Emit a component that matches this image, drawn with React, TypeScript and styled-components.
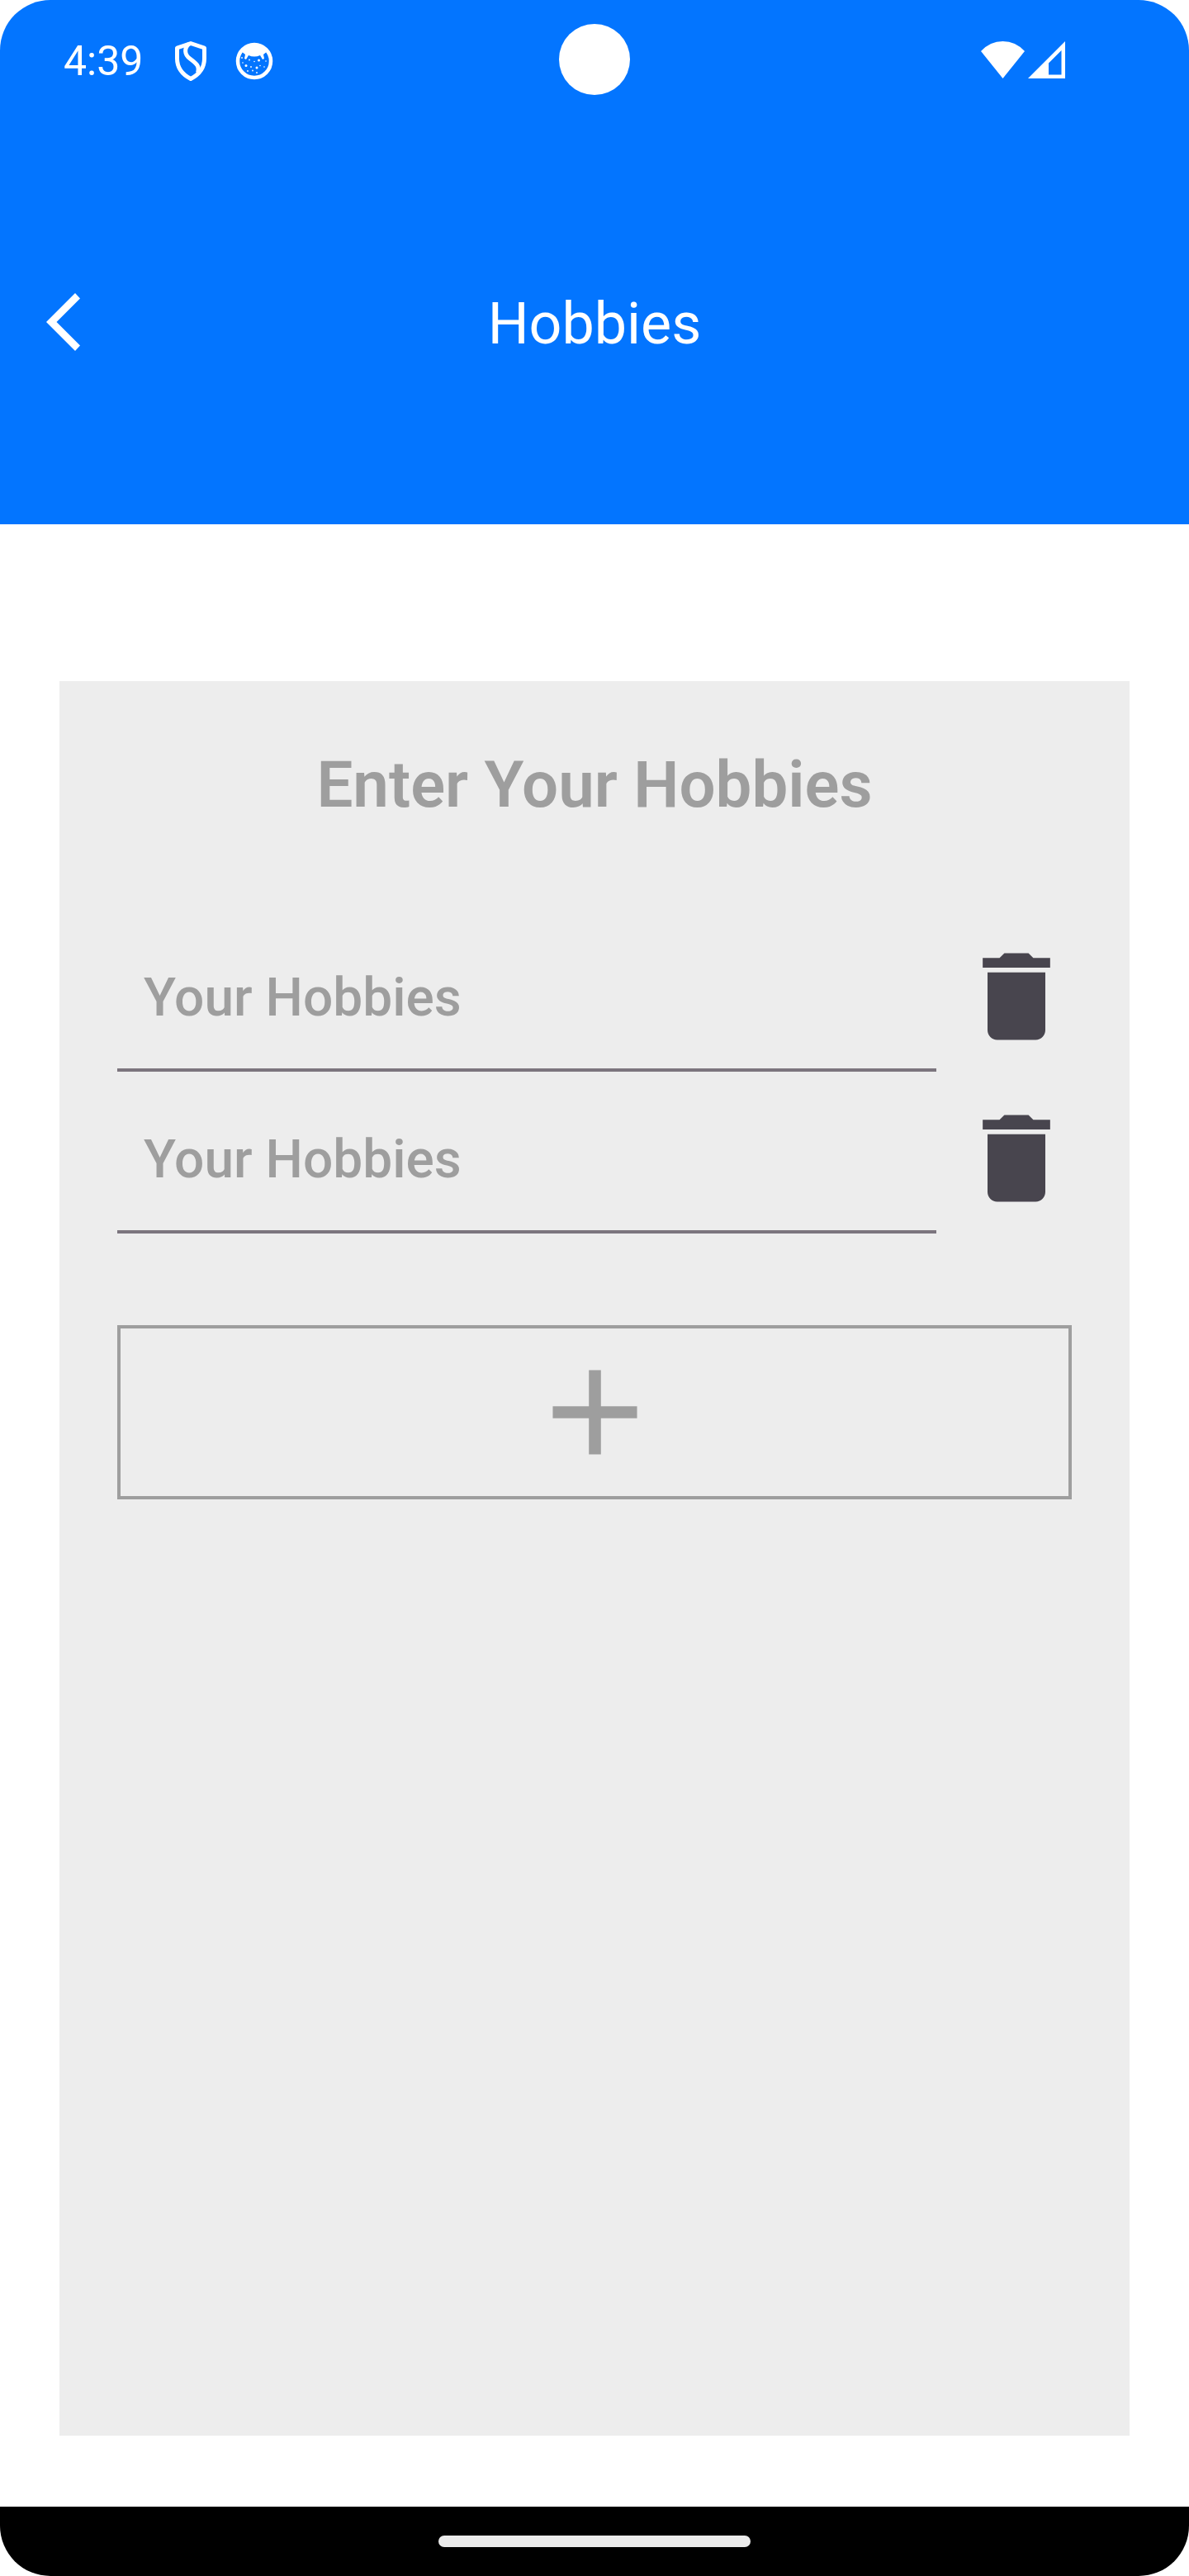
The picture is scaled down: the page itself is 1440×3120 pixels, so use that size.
import React, { useState } from "react";
import styled, { createGlobalStyle } from "styled-components";

const GlobalStyle = createGlobalStyle`
  *, *::before, *::after { box-sizing: border-box; }
  body { margin: 0; background: #ffffff; font-family: Roboto, "Noto Sans", sans-serif; }
  button, input { font: inherit; }
`;

const Screen = styled.div`
  display: flex;
  flex-direction: column;
  min-height: 100vh;
  overflow: hidden;
  border-radius: 61px;
  background: #ffffff;
`;

const Header = styled.header`
  background: #0375ff;
  color: #ffffff;
`;

const StatusBar = styled.div`
  display: grid;
  grid-template-columns: 1fr auto 1fr;
  align-items: center;
  height: 144px;
`;

const StatusGroup = styled.div<{ $end?: boolean }>`
  display: flex;
  align-items: center;
  justify-content: ${(p) => (p.$end ? "flex-end" : "flex-start")};
  gap: ${(p) => (p.$end ? 4 : 34)}px;
  padding: ${(p) => (p.$end ? "0 150px 0 0" : "4px 0 0 77px")};
`;

const Clock = styled.time`
  margin-right: 4px;
  font-size: 50px;
  line-height: 56px;
`;

const Camera = styled.div`
  width: 86px;
  height: 86px;
  border-radius: 50%;
  background: #ffffff;
`;

const TitleBar = styled.div`
  display: grid;
  grid-template-columns: 140px 1fr 140px;
  align-items: center;
  padding: 176px 0 175px;
`;

const BackButton = styled.button`
  display: flex;
  height: 140px;
  align-items: center;
  padding: 0 0 0 56px;
  border: 0;
  background: none;
  color: inherit;
`;

const Title = styled.h1`
  margin: 0;
  padding-top: 4px;
  text-align: center;
  font-size: 70px;
  font-weight: 400;
  line-height: 84px;
`;

const Card = styled.main`
  flex: 1;
  margin: 190px 72px 86px;
  padding: 80px 70px;
  background: #ededed;
`;

const Heading = styled.h2`
  margin: 0 0 118px;
  text-align: center;
  color: #9e9e9e;
  font-size: 78px;
  font-weight: 600;
  line-height: 92px;
`;

const HobbyList = styled.ul`
  margin: 0;
  padding: 0;
  list-style: none;
`;

const HobbyRow = styled.li`
  display: flex;
  align-items: flex-start;
  height: 196px;
`;

const HobbyInput = styled.input`
  flex: 1;
  min-width: 0;
  height: 183px;
  padding: 8px 32px 0;
  border: 0;
  border-bottom: 4px solid #7c757e;
  border-radius: 0;
  outline: none;
  background: none;
  color: #48454e;
  font-size: 64px;
  font-weight: 500;
  &::placeholder { color: #9e9e9e; opacity: 1; }
`;

const DeleteButton = styled.button`
  display: flex;
  height: 183px;
  align-items: center;
  padding: 0 26px 0 56px;
  border: 0;
  background: none;
  color: #48454e;
`;

const AddButton = styled.button`
  display: flex;
  align-items: center;
  justify-content: center;
  width: 100%;
  height: 211px;
  margin-top: 98px;
  padding: 0;
  border: 4px solid #9e9e9e;
  background: none;
  color: #9e9e9e;
`;

const NavBar = styled.footer`
  display: flex;
  align-items: center;
  justify-content: center;
  height: 84px;
  background: #000000;
`;

const HomeHandle = styled.div`
  width: 378px;
  height: 14px;
  border-radius: 7px;
  background: #ebebeb;
`;

const ShieldIcon = () => (
  <svg width="40" height="50" viewBox="0 0 40 50" fill="none" stroke="#fff" strokeWidth="5" strokeLinejoin="round" aria-hidden="true">
    <path d="M20 3.500 36.500 9V22C36.500 33 29.500 41.500 20 46.500 10.500 41.500 3.500 33 3.500 22V9Z" />
    <path d="M18 4C12 9 12 17 19 22C27 28 31 31 28.500 39" />
  </svg>
);

const FaceIcon = () => (
  <svg width="46" height="46" viewBox="0 0 46 46" aria-hidden="true">
    <circle cx="23" cy="23" r="20" fill="none" stroke="#fff" strokeWidth="4.500" />
    <path d="M7 11C12 -1 34 -1 39 11L34 15 35 20 33 21 30 16Q23 19 16 16L13 21 11 20 12 15Z" fill="#fff" />
    <g fill="#fff">
      <circle cx="13" cy="28.500" r="1.500" /><circle cx="26" cy="31" r="1.500" />
      <circle cx="28.500" cy="22" r="1.500" /><circle cx="17" cy="21.500" r="0.900" />
      <circle cx="23" cy="23.500" r="0.800" /><circle cx="19" cy="30" r="0.900" />
      <circle cx="8" cy="19" r="0.900" /><circle cx="9" cy="25" r="0.800" />
      <circle cx="15" cy="35" r="0.900" /><circle cx="21" cy="34.500" r="0.900" />
      <circle cx="26" cy="37" r="0.900" /><circle cx="30" cy="28.500" r="0.800" />
      <circle cx="35" cy="30" r="0.800" /><circle cx="37" cy="23" r="0.800" />
    </g>
  </svg>
);

const WifiIcon = () => (
  <svg width="53" height="45" viewBox="0 0 53 45" fill="#fff" aria-hidden="true">
    <path d="M0 12Q11 0 26.500 0T53 12L26.500 45Z" />
  </svg>
);

const SignalIcon = () => (
  <svg width="45" height="45" viewBox="0 0 45 45" fill="#fff" fillRule="evenodd" aria-hidden="true">
    <path d="M45 0V45H0ZM40.500 11 25 26.500V40.500H40.500Z" />
  </svg>
);

const BackIcon = () => (
  <svg width="41" height="70" viewBox="0 0 41 70" fill="currentColor" aria-hidden="true">
    <path d="M35 0 41 6.500 12.500 35 41 63.500 35 70 0 35Z" />
  </svg>
);

const TrashIcon = () => (
  <svg width="82" height="140" viewBox="5 0 14 24" fill="currentColor" aria-hidden="true">
    <path d="M6 19c0 1.100.9 2 2 2h8c1.100 0 2-.9 2-2V7H6v12zM19 4h-3.500l-1-1h-5l-1 1H5v2h14V4z" />
  </svg>
);

const PlusIcon = () => (
  <svg width="175" height="175" viewBox="0 0 24 24" fill="currentColor" aria-hidden="true">
    <path d="M19 13h-6v6h-2v-6H5v-2h6V5h2v6h6v2z" />
  </svg>
);

export default function App() {
  const [hobbies, setHobbies] = useState([
    { id: 1, text: "" },
    { id: 2, text: "" },
  ]);

  const update = (id: number, text: string) =>
    setHobbies((list) => list.map((h) => (h.id === id ? { ...h, text } : h)));
  const remove = (id: number) => setHobbies((list) => list.filter((h) => h.id !== id));
  const add = () =>
    setHobbies((list) => [...list, { id: Math.max(0, ...list.map((h) => h.id)) + 1, text: "" }]);

  return (
    <>
      <GlobalStyle />
      <Screen>
        <Header>
          <StatusBar>
            <StatusGroup>
              <Clock>4:39</Clock>
              <ShieldIcon />
              <FaceIcon />
            </StatusGroup>
            <Camera />
            <StatusGroup $end>
              <WifiIcon />
              <SignalIcon />
            </StatusGroup>
          </StatusBar>
          <TitleBar>
            <BackButton type="button" aria-label="Back">
              <BackIcon />
            </BackButton>
            <Title>Hobbies</Title>
          </TitleBar>
        </Header>
        <Card>
          <Heading>Enter Your Hobbies</Heading>
          <HobbyList>
            {hobbies.map((h) => (
              <HobbyRow key={h.id}>
                <HobbyInput
                  type="text"
                  aria-label="Your Hobbies"
                  placeholder="Your Hobbies"
                  value={h.text}
                  onChange={(e) => update(h.id, e.target.value)}
                />
                <DeleteButton type="button" aria-label="Delete hobby" onClick={() => remove(h.id)}>
                  <TrashIcon />
                </DeleteButton>
              </HobbyRow>
            ))}
          </HobbyList>
          <AddButton type="button" aria-label="Add hobby" onClick={add}>
            <PlusIcon />
          </AddButton>
        </Card>
        <NavBar>
          <HomeHandle />
        </NavBar>
      </Screen>
    </>
  );
}
